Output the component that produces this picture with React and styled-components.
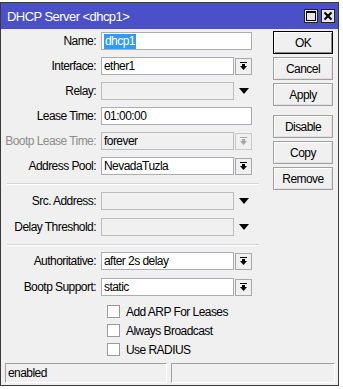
import React from "react";
import styled, { createGlobalStyle } from "styled-components";

const Global = createGlobalStyle`
  html, body {
    margin: 0;
    padding: 0;
    background: #ffffff;
  }
  body {
    font-family: "Liberation Sans", Arial, sans-serif;
    font-size: 12px;
    letter-spacing: -0.55px;
    color: #000;
  }
`;

const Window = styled.div`
  margin: 2px 0 0 0;
  width: 339px;
  height: 384px;
  box-sizing: border-box;
  border: 1px solid #3a3a3a;
  background: #f0f0f0;
  display: flex;
  flex-direction: column;
`;

const TitleBar = styled.div`
  height: 26px;
  background: #4b50c8;
  display: flex;
  align-items: center;
  justify-content: space-between;
  padding: 0 3px 0 6px;
  flex-shrink: 0;
`;

const Title = styled.span`
  color: #fff;
  font-size: 13px;
`;

const TitleButtons = styled.div`
  display: flex;
  gap: 3px;
`;

const TitleButton = styled.div`
  width: 14px;
  height: 14px;
  box-sizing: border-box;
  border: 1px solid #222;
  background: #e6e6e6;
  display: flex;
  align-items: center;
  justify-content: center;
`;

const Body = styled.div`
  display: flex;
  flex: 1;
`;

const Form = styled.div`
  width: 262px;
  display: flex;
  flex-direction: column;
`;

const Group = styled.div`
  display: flex;
  flex-direction: column;
  gap: ${(p) => p.$gap}px;
  padding: ${(p) => p.$pad};
`;

const Separator = styled.div`
  height: 1px;
  margin: 0 4px 0 6px;
  background: #d5d5d5;
  border-bottom: 1px solid #ffffff;
`;

const Row = styled.div`
  display: flex;
  align-items: center;
  height: 18px;
`;

const Label = styled.label`
  width: 100px;
  text-align: right;
  padding-right: 5px;
  box-sizing: border-box;
  white-space: nowrap;
  color: ${(p) => (p.$disabled ? "#8d8d8d" : "#000")};
`;

const Field = styled.div`
  width: ${(p) => (p.$full ? 151 : 133)}px;
  height: 18px;
  box-sizing: border-box;
  border: 1px solid ${(p) => (p.$disabled ? "#bcbcbc" : "#abadb3")};
  background: ${(p) => (p.$disabled ? "#f0f0f0" : "#fff")};
  display: flex;
  align-items: center;
  padding-left: 2px;
  white-space: nowrap;
  overflow: hidden;
`;

const Selected = styled.span`
  background: #3399ff;
  color: #fff;
  padding: 0 1px;
  line-height: 15px;
`;

const ArrowBox = styled.div`
  width: 17px;
  height: 17px;
  margin-left: 1px;
  box-sizing: border-box;
  border: 1px solid ${(p) => (p.$disabled ? "#c8c8c8" : "#a8a8a8")};
  background: #f0f0f0;
  display: flex;
  align-items: center;
  justify-content: center;
`;

const ArrowPlain = styled.div`
  width: 17px;
  margin-left: 1px;
  display: flex;
  align-items: center;
  justify-content: center;
`;

const CheckRow = styled.div`
  display: flex;
  align-items: center;
  height: 13px;
  padding-left: 106px;
  gap: 6px;
`;

const CheckBox = styled.div`
  width: 13px;
  height: 13px;
  box-sizing: border-box;
  border: 1px solid #999;
  background: #fff;
`;

const Buttons = styled.div`
  display: flex;
  flex-direction: column;
  padding: 2px 0 0 10px;
`;

const Button = styled.div`
  width: 60px;
  height: 23px;
  box-sizing: border-box;
  border: 1px solid ${(p) => (p.$default ? "#000" : "#a0a0a0")};
  box-shadow: inset 1px 1px 0 #fff, inset -1px -1px 0 ${(p) => (p.$default ? "#8a8a8a" : "#e0e0e0")};
  background: #f0f0f0;
  display: flex;
  align-items: center;
  justify-content: center;
  margin-top: ${(p) => p.$mt || 0}px;
`;

const StatusBar = styled.div`
  display: flex;
  gap: 4px;
  padding: 0 3px 2px 4px;
  height: 20px;
`;

const StatusCell = styled.div`
  flex: ${(p) => p.$grow};
  height: 20px;
  box-sizing: border-box;
  border-top: 1px solid #a0a0a0;
  border-left: 1px solid #a0a0a0;
  border-right: 1px solid #fff;
  border-bottom: 1px solid #fff;
  display: flex;
  align-items: center;
  padding-left: 2px;
`;

const Spacer = styled.div`
  flex: 1;
`;

function DropIcon({ disabled }) {
  const c = disabled ? "#a8a8a8" : "#000";
  return (
    <svg width="9" height="9" viewBox="0 0 9 9">
      <rect x="1" y="0" width="7" height="1" fill={c} />
      <rect x="3" y="2" width="3" height="2" fill={c} />
      <polygon points="1,4 8,4 4.5,8" fill={c} />
    </svg>
  );
}

function Triangle() {
  return (
    <svg width="10" height="6" viewBox="0 0 10 6">
      <polygon points="0,0 10,0 5,6" fill="#000" />
    </svg>
  );
}

function FieldRow({ label, value, kind, disabled, selected }) {
  return (
    <Row>
      <Label $disabled={disabled}>{label}</Label>
      <Field $full={kind === "full"} $disabled={disabled || kind === "plain"}>
        {selected ? <Selected>{value}</Selected> : value}
      </Field>
      {kind === "drop" && (
        <ArrowBox $disabled={disabled}>
          <DropIcon disabled={disabled} />
        </ArrowBox>
      )}
      {kind === "plain" && (
        <ArrowPlain>
          <Triangle />
        </ArrowPlain>
      )}
    </Row>
  );
}

export default function App() {
  return (
    <>
      <Global />
      <Window>
        <TitleBar>
          <Title>DHCP Server &lt;dhcp1&gt;</Title>
          <TitleButtons>
            <TitleButton>
              <svg width="10" height="10" viewBox="0 0 10 10">
                <rect x="0.5" y="0.5" width="9" height="9" fill="none" stroke="#000" />
                <rect x="0" y="0" width="10" height="2" fill="#000" />
              </svg>
            </TitleButton>
            <TitleButton>
              <svg width="10" height="10" viewBox="0 0 10 10">
                <path d="M1.5 1.5 L8.5 8.5 M8.5 1.5 L1.5 8.5" stroke="#000" strokeWidth="2" />
              </svg>
            </TitleButton>
          </TitleButtons>
        </TitleBar>
        <Body>
          <Form>
            <Group $gap={7} $pad="3px 0 8px 0">
              <FieldRow label="Name:" value="dhcp1" kind="full" selected />
              <FieldRow label="Interface:" value="ether1" kind="drop" />
              <FieldRow label="Relay:" value="" kind="plain" />
              <FieldRow label="Lease Time:" value="01:00:00" kind="full" />
              <FieldRow label="Bootp Lease Time:" value="forever" kind="drop" disabled />
              <FieldRow label="Address Pool:" value="NevadaTuzla" kind="drop" />
            </Group>
            <Separator />
            <Group $gap={8} $pad="7px 0 8px 0">
              <FieldRow label="Src. Address:" value="" kind="plain" />
              <FieldRow label="Delay Threshold:" value="" kind="plain" />
            </Group>
            <Separator />
            <Group $gap={8} $pad="6px 0 9px 0">
              <FieldRow label="Authoritative:" value="after 2s delay" kind="drop" />
              <FieldRow label="Bootp Support:" value="static" kind="drop" />
            </Group>
            <Group $gap={6} $pad="0">
              <CheckRow>
                <CheckBox />
                <span>Add ARP For Leases</span>
              </CheckRow>
              <CheckRow>
                <CheckBox />
                <span>Always Broadcast</span>
              </CheckRow>
              <CheckRow>
                <CheckBox />
                <span>Use RADIUS</span>
              </CheckRow>
            </Group>
          </Form>
          <Buttons>
            <Button $default>OK</Button>
            <Button $mt={3}>Cancel</Button>
            <Button $mt={3}>Apply</Button>
            <Button $mt={9}>Disable</Button>
            <Button $mt={3}>Copy</Button>
            <Button $mt={3}>Remove</Button>
          </Buttons>
        </Body>
        <Spacer />
        <StatusBar>
          <StatusCell $grow={162}>enabled</StatusCell>
          <StatusCell $grow={164} />
        </StatusBar>
      </Window>
    </>
  );
}
